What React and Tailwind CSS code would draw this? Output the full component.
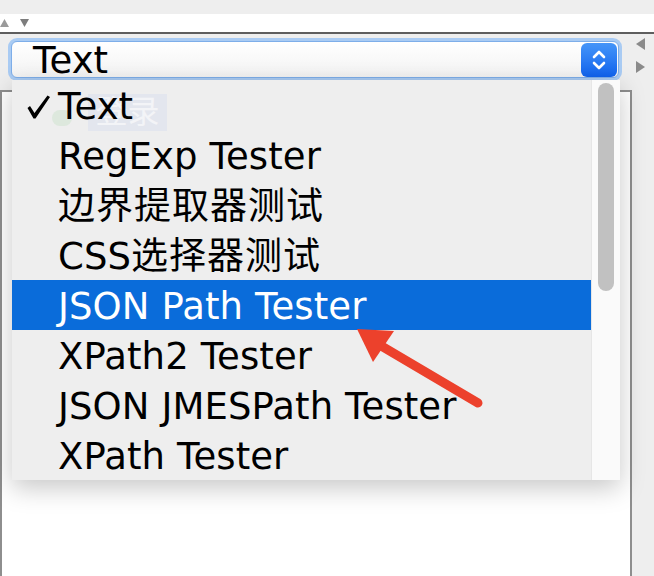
import React from "react";

const items = [
  "Text",
  "RegExp Tester",
  "边界提取器测试",
  "CSS选择器测试",
  "JSON Path Tester",
  "XPath2 Tester",
  "JSON JMESPath Tester",
  "XPath Tester",
];

const font = { fontFamily: '"DejaVu Sans", "Noto Sans CJK SC", sans-serif' };

// CJK glyphs in the reference run a little wider than Noto's
function Label({ text }) {
  const parts = text.split(/([\u4e00-\u9fff]+)/).filter(Boolean);
  return (
    <span className="whitespace-nowrap tracking-[0.1px]">
      {parts.map((p, i) =>
        /[\u4e00-\u9fff]/.test(p) ? (
          <span key={i} className="tracking-[1px]">{p}</span>
        ) : (
          <span key={i}>{p}</span>
        )
      )}
    </span>
  );
}

function Row({ label, checked, selected }) {
  return (
    <div
      className={`flex h-[50px] items-start pt-[4px] text-[37px] leading-[45px] ${
        selected ? "bg-[#0a6cda] text-white" : "text-black"
      }`}
    >
      <span className="w-[46px] shrink-0 pl-[14px] pt-[10px]">
        {checked && (
          <svg width="25" height="26" viewBox="0 0 25 26">
            <path d="M1.5 14 L4 12 L8.5 19 L21.5 1.5 L24 3 L9.5 24.5 L7.5 24.5 Z" fill="black" />
          </svg>
        )}
      </span>
      <Label text={label} />
    </div>
  );
}

export default function App() {
  return (
    <div className="flex h-[576px] w-[654px] flex-col overflow-hidden bg-[#eeeeee]" style={font}>
      <div className="h-[14px] shrink-0 bg-[#eeeeee]" />
      <div className="flex h-[18px] shrink-0 items-center gap-[11px] bg-white">
        <svg width="9" height="8" viewBox="0 0 9 8">
          <path d="M4.5 0 L9 8 L0 8 Z" fill="#9a9a9a" />
        </svg>
        <svg width="9" height="8" viewBox="0 0 9 8">
          <path d="M0 0 L9 0 L4.5 8 Z" fill="#7d7d7d" />
        </svg>
      </div>
      <div className="h-[2px] shrink-0 bg-[#5e5e5e]" />

      <div className="relative min-h-0 flex-1 overflow-hidden">
        <div className="flex pt-[4px]">
          <div className="ml-[8px] flex h-[43px] w-[614px] items-center rounded-[9px] bg-[#a9cbf3] p-[3px]">
            <div className="flex h-full w-full items-center rounded-[6px] border border-[#7eaee9] bg-gradient-to-b from-white to-[#f3f3f3] pr-[1px]">
              <span className="flex-1 pl-[21px] pt-[2px] text-[37px] leading-[36px] tracking-[0.1px] text-black">Text</span>
              <div className="flex h-[34px] w-[36px] flex-col items-center justify-center rounded-[6px] bg-gradient-to-b from-[#4595f8] to-[#0f62ee]">
                <svg width="14" height="24" viewBox="0 0 14 24">
                  <path d="M2 9 L7 4 L12 9" fill="none" stroke="white" strokeWidth="2.6" strokeLinecap="round" strokeLinejoin="round" />
                  <path d="M2 15 L7 20 L12 15" fill="none" stroke="white" strokeWidth="2.6" strokeLinecap="round" strokeLinejoin="round" />
                </svg>
              </div>
            </div>
          </div>
          <div className="ml-[14px] flex flex-col gap-[11px]">
            <svg width="9" height="12" viewBox="0 0 9 12">
              <path d="M9 0 L9 12 L0 6 Z" fill="#8a8a8a" />
            </svg>
            <svg width="9" height="12" viewBox="0 0 9 12">
              <path d="M0 0 L9 6 L0 12 Z" fill="#8a8a8a" />
            </svg>
          </div>
        </div>

        <div className="mt-[9px] h-[600px] w-[632px] border-2 border-[#8e8e8e] bg-white" />

        {/* dropdown list */}
        <div className="absolute left-[12px] top-[46px] flex h-[400px] w-[608px] bg-[#eeeeee] shadow-[0_8px_24px_rgba(0,0,0,0.22)]">
          {/* faint ghost of a button showing through behind the first item */}
          <div className="absolute left-[40px] top-[30px] h-[16px] w-[20px] rounded-full bg-[#dde8dd]" />
          <div className="absolute left-[76px] top-[14px] flex h-[37px] w-[79px] items-center justify-center bg-[#e3e6ee] text-[32px] leading-[37px] text-[#f3f4f7]">
            登录
          </div>
          <div className="relative w-[579px]">
            {items.map((it, i) => (
              <Row key={it} label={it} checked={i === 0} selected={i === 4} />
            ))}
          </div>
          <div className="w-[29px] border-l border-[#e6e6e6] bg-[#fafafa] pl-[6px] pt-[3px]">
            <div className="h-[208px] w-[16px] rounded-full bg-[#c1c1c1]" />
          </div>
        </div>

        {/* red arrow annotation */}
        <svg className="absolute left-0 top-0" width="654" height="543" viewBox="0 33 654 543">
          <path d="M478 402 L378 343" stroke="#ec412c" strokeWidth="9" strokeLinecap="round" />
          <path d="M357 328 L394 330 L373 361 Z" fill="#ec412c" />
        </svg>
      </div>
    </div>
  );
}
